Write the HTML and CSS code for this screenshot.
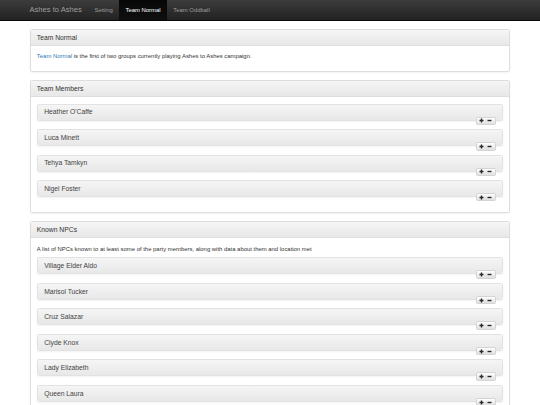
FILE: index.html
```html
<!DOCTYPE html>
<html lang="en">
<head>
<meta charset="utf-8">
<title>Ashes to Ashes - Team Normal</title>
<link rel="stylesheet" href="styles.css">
</head>
<body>
<nav class="navbar">
  <div class="container nav-inner">
    <a class="brand" href="#">Ashes to Ashes</a>
    <ul class="nav">
      <li><a href="#">Setting</a></li>
      <li class="active"><a href="#">Team Normal</a></li>
      <li><a href="#">Team Oddball</a></li>
    </ul>
  </div>
</nav>

<div class="container">
  <section class="panel">
    <div class="panel-heading"><h3 class="panel-title">Team Normal</h3></div>
    <div class="panel-body intro">
      <p><a href="#">Team Normal</a> is the first of two groups currently playing Ashes to Ashes campaign.</p>
    </div>
  </section>

  <section class="panel">
    <div class="panel-heading"><h3 class="panel-title">Team Members</h3></div>
    <div class="panel-body list-body">
      <div class="item"><div class="item-heading"><h4 class="item-title">Heather O'Caffe</h4><span class="toggle"><svg viewBox="0 0 10 10" class="ico"><path d="M5 1v8M1 5h8"/></svg><span class="slash">/</span><svg viewBox="0 0 10 10" class="ico"><path d="M1 5h8"/></svg></span></div></div>
      <div class="item"><div class="item-heading"><h4 class="item-title">Luca Minett</h4><span class="toggle"><svg viewBox="0 0 10 10" class="ico"><path d="M5 1v8M1 5h8"/></svg><span class="slash">/</span><svg viewBox="0 0 10 10" class="ico"><path d="M1 5h8"/></svg></span></div></div>
      <div class="item"><div class="item-heading"><h4 class="item-title">Tehya Tamkyn</h4><span class="toggle"><svg viewBox="0 0 10 10" class="ico"><path d="M5 1v8M1 5h8"/></svg><span class="slash">/</span><svg viewBox="0 0 10 10" class="ico"><path d="M1 5h8"/></svg></span></div></div>
      <div class="item"><div class="item-heading"><h4 class="item-title">Nigel Foster</h4><span class="toggle"><svg viewBox="0 0 10 10" class="ico"><path d="M5 1v8M1 5h8"/></svg><span class="slash">/</span><svg viewBox="0 0 10 10" class="ico"><path d="M1 5h8"/></svg></span></div></div>
    </div>
  </section>

  <section class="panel">
    <div class="panel-heading"><h3 class="panel-title">Known NPCs</h3></div>
    <div class="panel-body list-body">
      <p>A list of NPCs known to at least some of the party members, along with data about them and location met</p>
      <div class="item"><div class="item-heading"><h4 class="item-title">Village Elder Aldo</h4><span class="toggle"><svg viewBox="0 0 10 10" class="ico"><path d="M5 1v8M1 5h8"/></svg><span class="slash">/</span><svg viewBox="0 0 10 10" class="ico"><path d="M1 5h8"/></svg></span></div></div>
      <div class="item"><div class="item-heading"><h4 class="item-title">Marisol Tucker</h4><span class="toggle"><svg viewBox="0 0 10 10" class="ico"><path d="M5 1v8M1 5h8"/></svg><span class="slash">/</span><svg viewBox="0 0 10 10" class="ico"><path d="M1 5h8"/></svg></span></div></div>
      <div class="item"><div class="item-heading"><h4 class="item-title">Cruz Salazar</h4><span class="toggle"><svg viewBox="0 0 10 10" class="ico"><path d="M5 1v8M1 5h8"/></svg><span class="slash">/</span><svg viewBox="0 0 10 10" class="ico"><path d="M1 5h8"/></svg></span></div></div>
      <div class="item"><div class="item-heading"><h4 class="item-title">Clyde Knox</h4><span class="toggle"><svg viewBox="0 0 10 10" class="ico"><path d="M5 1v8M1 5h8"/></svg><span class="slash">/</span><svg viewBox="0 0 10 10" class="ico"><path d="M1 5h8"/></svg></span></div></div>
      <div class="item"><div class="item-heading"><h4 class="item-title">Lady Elizabeth</h4><span class="toggle"><svg viewBox="0 0 10 10" class="ico"><path d="M5 1v8M1 5h8"/></svg><span class="slash">/</span><svg viewBox="0 0 10 10" class="ico"><path d="M1 5h8"/></svg></span></div></div>
      <div class="item"><div class="item-heading"><h4 class="item-title">Queen Laura</h4><span class="toggle"><svg viewBox="0 0 10 10" class="ico"><path d="M5 1v8M1 5h8"/></svg><span class="slash">/</span><svg viewBox="0 0 10 10" class="ico"><path d="M1 5h8"/></svg></span></div></div>
    </div>
  </section>
</div>
</body>
</html>
```

FILE: styles.css
```css
* { box-sizing: border-box; }

html, body { margin: 0; padding: 0; }

body {
  font-family: "Liberation Sans", Arial, Helvetica, sans-serif;
  font-size: 5.91px;
  line-height: 8.44px;
  color: #333;
  background: #fff;
}

a { color: #337ab7; text-decoration: none; }

.container {
  width: 493.6px;
  margin: 0 auto;
  padding: 0 6.33px;
}

/* navbar */
.navbar {
  height: 21.1px;
  background: linear-gradient(#3c3c3c, #222);
  border-bottom: 1px solid #080808;
  margin-bottom: 7.6px;
}

.nav-inner { display: flex; height: 100%; }

.brand {
  display: block;
  margin-left: -6.33px;
  padding: 6.1px 6.33px;
  font-size: 7.59px;
  line-height: 8.44px;
  color: #9d9d9d;
}

.nav {
  list-style: none;
  margin: 0;
  padding: 0;
  display: flex;
}

.nav a {
  display: block;
  height: 20.1px;
  padding: 6.1px 6.33px;
  line-height: 8.44px;
  color: #9d9d9d;
}

.nav .active a {
  color: #fff;
  background: linear-gradient(#080808, #0f0f0f);
  box-shadow: inset 0 1px 2px rgba(0, 0, 0, .25);
}

/* panels */
.panel {
  border: 1px solid #ddd;
  border-radius: 1.7px;
  margin-bottom: 8.44px;
  background: #fff;
  box-shadow: 0 1px 2px rgba(0, 0, 0, .05);
}

.panel-heading {
  padding: 3.9px 6.33px;
  background: linear-gradient(#f5f5f5, #e8e8e8);
  border-bottom: 1px solid #ddd;
  border-radius: 1.7px 1.7px 0 0;
}

.panel-title {
  margin: 0;
  font-size: 6.75px;
  line-height: 7.43px;
  font-weight: normal;
  color: #333;
}

.panel-body { padding: 6.33px; }

.panel-body p { margin: 0 0 4.22px; }

.intro p { margin-bottom: 3.6px; }

/* nested items */
.item {
  border: 1px solid #e2e2e2;
  border-radius: 1.7px;
  margin-bottom: 8.44px;
  box-shadow: 0 1px 2px rgba(0, 0, 0, .05);
}

.item-heading {
  position: relative;
  padding: 3.8px 6.33px;
  background: linear-gradient(#f5f5f5, #e8e8e8);
  border-radius: 1.7px;
}

.item-title {
  margin: 0;
  font-size: 6.75px;
  line-height: 7.43px;
  font-weight: normal;
  color: #444;
}

.toggle {
  position: absolute;
  top: 12px;
  right: 6.33px;
  height: 8.5px;
  width: 20px;
  display: flex;
  align-items: center;
  justify-content: center;
  gap: 0.9px;
  border: 1px solid #d4d4d4;
  border-radius: 1.3px;
  background: linear-gradient(#fff, #e0e0e0);
}

.ico {
  width: 5px;
  height: 5px;
  stroke: #2a2a2a;
  stroke-width: 2.8;
  fill: none;
}

.slash {
  font-size: 4.2px;
  line-height: 5px;
  color: #bbb;
}
```
